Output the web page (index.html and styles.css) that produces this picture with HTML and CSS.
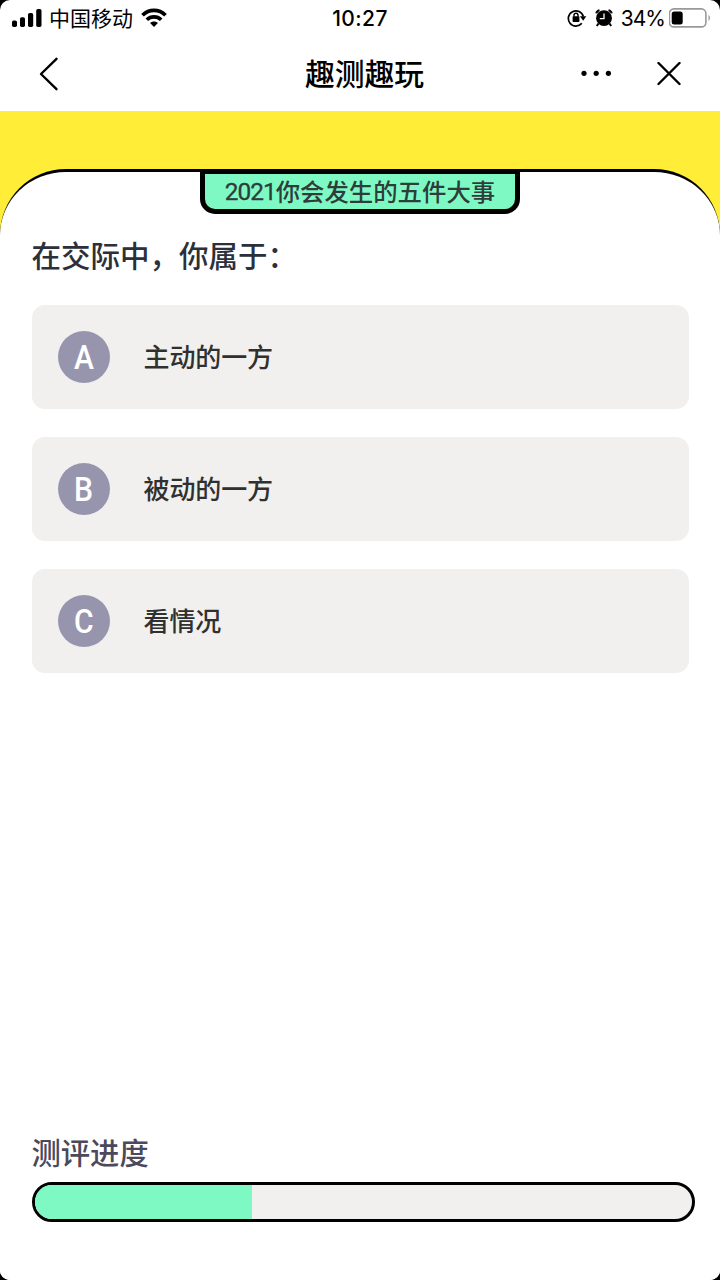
FILE: index.html
```html
<!DOCTYPE html>
<html lang="zh-CN">
<head>
<meta charset="utf-8">
<title>趣测趣玩</title>
<link rel="stylesheet" href="styles.css">
</head>
<body>
<div class="screen">
  <header class="status">
    <div class="status-left">
      <svg class="signal" width="30" height="20" viewBox="0 0 30 20"><rect x="0" y="12.500" width="5" height="6.500" rx="1.700"/><rect x="8" y="9.200" width="5" height="9.800" rx="1.700"/><rect x="16" y="5" width="5.200" height="14" rx="1.700"/><rect x="24.200" y="1" width="5.300" height="18" rx="1.700"/></svg>
      <span class="carrier">中国移动</span>
      <svg class="wifi" width="26" height="20" viewBox="0 0 26 20"><g fill="none" stroke="#000" stroke-width="3.700"><path d="M1.500 7.300C8 .8 18 .8 24.500 7.300"/><path d="M5.800 11.700C9.800 7.800 16.200 7.800 20.200 11.700"/></g><path d="M13 19l-3.900-4c2.200-2 5.600-2 7.800 0z"/></svg>
    </div>
    <div class="clock">10:27</div>
    <div class="status-right">
      <svg class="lock" width="20" height="20" viewBox="0 0 20 20"><path d="M14.800 15.300A7.600 7.600 0 1 1 16.300 8.500" fill="none" stroke="#000" stroke-width="1.700"/><path d="M12.900 8.200h6.400l-3.100 4.600z"/><rect x="5.600" y="8.300" width="6.800" height="5.700" rx=".7"/><path d="M7 8.800V7.200a2 2 0 0 1 4 0v1.600" fill="none" stroke="#000" stroke-width="1.400"/></svg>
      <svg class="alarm" width="18" height="18" viewBox="0 0 18 18"><circle cx="9" cy="9.200" r="7.900"/><path d="M1.300 4.400Q1.800 2 4.500 1.300M16.700 4.400Q16.200 2 13.500 1.300M3.500 14.500L1.800 17M14.500 14.500l1.700 2.500" fill="none" stroke="#000" stroke-width="2"/><path d="M9 4.500v5.200H4.800" fill="none" stroke="#fff" stroke-width="1.300"/></svg>
      <span class="percent">34%</span>
      <svg class="battery" width="43" height="20" viewBox="0 0 43 20"><rect x=".4" y=".9" width="36.500" height="18" rx="4.500" fill="none" stroke="#999" stroke-width="1.600"/><rect x="2.700" y="3.500" width="11" height="13" rx="2.500"/><path d="M39.500 6.500q3 3.400 0 6.800z" fill="#999"/></svg>
    </div>
  </header>
  <nav class="nav">
    <svg class="back" width="20" height="34" viewBox="0 0 20 34"><path d="M17.500 1.800L2 17l15.500 15.200" fill="none" stroke="#000" stroke-width="2.400" stroke-linecap="round" stroke-linejoin="round"/></svg>
    <h1 class="title">趣测趣玩</h1>
    <div class="nav-actions">
      <svg width="32" height="8" viewBox="0 0 32 8"><circle cx="4" cy="3.300" r="2.600"/><circle cx="16.200" cy="3.300" r="2.600"/><circle cx="28.400" cy="3.300" r="2.600"/></svg>
      <svg width="24" height="24" viewBox="0 0 24 24"><path d="M1.500 1l21 21M22.500 1l-21 21" stroke="#000" stroke-width="2.400" stroke-linecap="round"/></svg>
    </div>
  </nav>
  <main class="stage">
    <section class="card">
      <div class="badge"><span class="year">2021</span><span>你会发生的五件大事</span></div>
      <h2 class="question">在交际中，你属于：</h2>
      <ul class="options">
        <li class="option"><span class="letter"><span class="glyph">A</span></span><span class="answer">主动的一方</span></li>
        <li class="option"><span class="letter"><span class="glyph">B</span></span><span class="answer">被动的一方</span></li>
        <li class="option"><span class="letter"><span class="glyph">C</span></span><span class="answer">看情况</span></li>
      </ul>
      <footer class="progress">
        <div class="progress-label">测评进度</div>
        <div class="track"><div class="fill" style="width:33.100%"></div></div>
      </footer>
    </section>
  </main>
</div>
</body>
</html>
```
FILE: styles.css
```css
* { box-sizing: border-box; }
html { background: #000; }
body {
  margin: 0;
  font-family: "Noto Sans CJK SC", sans-serif;
  color: #000;
}
svg { display: block; flex: none; }
.screen {
  width: 720px;
  height: 1280px;
  display: flex;
  flex-direction: column;
  background: #fff;
  border-radius: 10px;
  overflow: hidden;
}
.status {
  height: 36px;
  display: grid;
  grid-template-columns: 1fr auto 1fr;
  align-items: center;
  line-height: 36px;
  white-space: nowrap;
}
.status-left, .status-right { display: flex; align-items: center; }
.status-left { padding-left: 12px; }
.carrier { margin-left: 7px; padding-bottom: 2px; line-height: 34px; font-size: 21px; }
.wifi { margin-left: 8px; }
.clock { padding-top: 2px; font: 500 21px/34px Inter, sans-serif; letter-spacing: .4px; }
.status-right { justify-content: flex-end; padding-right: 8px; }
.alarm { margin-left: 8px; }
.percent {
  margin: 0 4px 0 8px;
  padding-top: 2px;
  font: 400 21px/34px Inter, sans-serif;
  letter-spacing: -1px;
}
.nav {
  height: 75px;
  display: grid;
  grid-template-columns: 1fr auto 1fr;
  align-items: center;
}
.back { margin-left: 39px; }
.title {
  margin: 0 0 0 9px;
  padding-bottom: 4px;
  font-size: 29.800px;
  line-height: 70px;
  font-weight: 500;
}
.nav-actions {
  display: flex;
  align-items: center;
  justify-content: flex-end;
  gap: 45px;
  padding-right: 39px;
}
.stage {
  flex: 1;
  display: flex;
  padding-top: 58px;
  background: linear-gradient(#ffed37 200px, #fff 200px);
}
.card {
  flex: 1;
  display: flex;
  flex-direction: column;
  background: #fff;
  border-top: 3px solid #000;
  border-radius: 66px 66px 0 0;
}
.badge {
  align-self: center;
  display: flex;
  justify-content: center;
  width: 320px;
  height: 45px;
  margin-top: -3px;
  border: 5px solid #000;
  border-radius: 0 0 15px 15px;
  background: #7ff9c4;
  color: #2d3d39;
  font-size: 24.400px;
  font-weight: 500;
  line-height: 33px;
  white-space: nowrap;
}
.year {
  font: 400 24.400px/36px Roboto, sans-serif;
  letter-spacing: -1px;
  -webkit-text-stroke: .3px;
}
.question {
  margin: 18px 31.500px 2px;
  font-size: 29.500px;
  line-height: 44px;
  font-weight: 500;
  color: #2c303a;
}
.options {
  list-style: none;
  margin: 27px 31.500px 0;
  padding: 0;
  display: grid;
  gap: 28px;
}
.option {
  height: 104px;
  display: flex;
  align-items: center;
  gap: 34px;
  padding-left: 26px;
  border-radius: 13px;
  background: #f1f0ef;
  color: #303030;
  font-size: 26px;
  font-weight: 500;
}
.answer { padding-bottom: 4px; letter-spacing: -.1px; }
.letter {
  width: 52px;
  height: 52px;
  border-radius: 50%;
  background: #9795ae;
  color: #fff;
  font: 500 33px/53px Roboto, sans-serif;
  text-align: center;
}
.glyph { display: inline-block; transform: scaleX(.91); }
.progress { margin: auto 25px 58px 31.500px; }
.progress-label {
  margin-bottom: 9px;
  font-size: 29.300px;
  line-height: 44px;
  font-weight: 500;
  color: #4b495b;
}
.track {
  height: 40px;
  border: 3px solid #000;
  border-radius: 20px;
  background: #f1f0ef;
  overflow: hidden;
}
.fill { height: 100%; background: #7ff9c4; }
```
